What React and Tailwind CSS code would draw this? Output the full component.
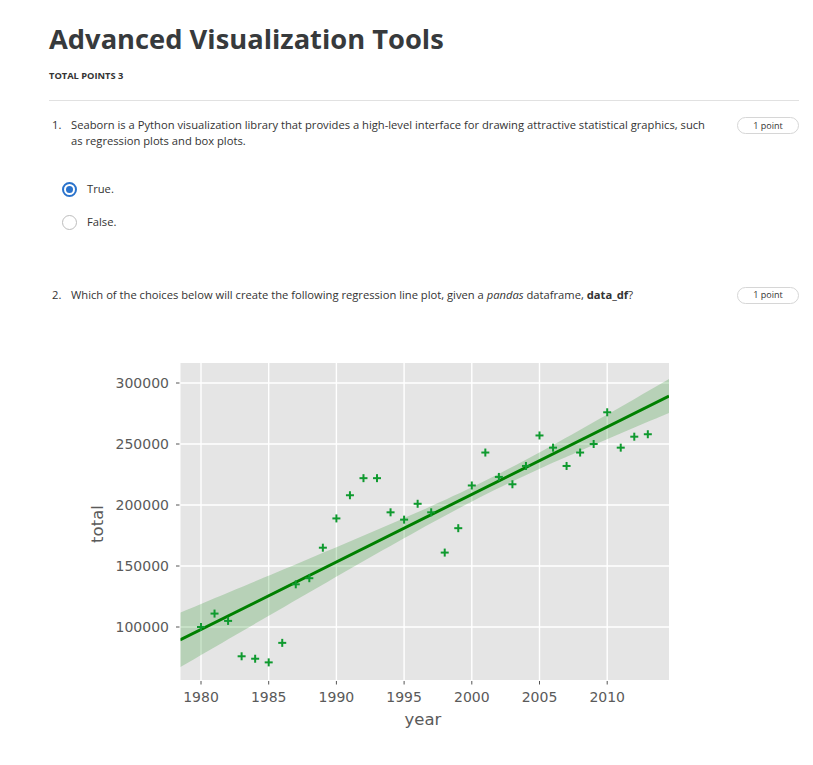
import React from 'react';

const points = [
  [1980, 100000], [1981, 111000], [1982, 105000], [1983, 76000], [1984, 74000],
  [1985, 71000], [1986, 87000], [1987, 135000], [1988, 140000], [1989, 165000],
  [1990, 189000], [1991, 208000], [1992, 222000], [1993, 222000], [1994, 194000],
  [1995, 188000], [1996, 201000], [1997, 194000], [1998, 161000], [1999, 181000],
  [2000, 216000], [2001, 243000], [2002, 223000], [2003, 217000], [2004, 232000],
  [2005, 257000], [2006, 247000], [2007, 232000], [2008, 243000], [2009, 250000],
  [2010, 276000], [2011, 247000], [2012, 256000], [2013, 258000],
];

// page coordinates of the plot (svg is offset by translate)
const px = (year) => 201 + (year - 1980) * 13.54;
const py = (v) => 627 - ((v - 100000) / 50000) * 61;
const lineY = (x) => 640 - 0.499 * (x - 180);
const halfW = (x) => Math.sqrt(49 + 0.0073 * (x - 489) * (x - 489));

const bandPath = () => {
  const top = [];
  const bottom = [];
  for (let x = 180; x <= 669; x += 7) {
    top.push(`${x},${(lineY(x) - halfW(x)).toFixed(1)}`);
    bottom.unshift(`${x},${(lineY(x) + halfW(x)).toFixed(1)}`);
  }
  top.push(`669,${(lineY(669) - halfW(669)).toFixed(1)}`);
  bottom.unshift(`669,${(lineY(669) + halfW(669)).toFixed(1)}`);
  return 'M' + top.join(' L') + ' L' + bottom.join(' L') + ' Z';
};

const Chart = () => {
  const xticks = [1980, 1985, 1990, 1995, 2000, 2005, 2010];
  const yticks = [300000, 250000, 200000, 150000, 100000];
  return (
    <svg width="600" height="390" className="block ml-[31px] mt-[46px]">
      <defs>
        <clipPath id="plot">
          <rect x="180.5" y="363" width="488.5" height="317" />
        </clipPath>
      </defs>
      <g transform="translate(-80,-350)" fontFamily="'DejaVu Sans', sans-serif">
        <rect x="180.5" y="363" width="488.5" height="317" fill="#e5e5e5" />
        {xticks.map((t) => (
          <line key={t} x1={px(t)} x2={px(t)} y1="363" y2="680" stroke="#fff" strokeWidth="1.4" />
        ))}
        {yticks.map((t) => (
          <line key={t} x1="180.5" x2="669" y1={py(t)} y2={py(t)} stroke="#fff" strokeWidth="1.4" />
        ))}
        <g clipPath="url(#plot)">
          <path d={bandPath()} fill="#008000" fillOpacity="0.2" />
          <line x1="180" y1={lineY(180)} x2="669" y2={lineY(669)} stroke="#008000" strokeWidth="3" />
        </g>
        {points.map(([yr, v]) => {
          const x = px(yr);
          const y = py(v);
          return (
            <g key={yr} stroke="#0f9a2f" strokeWidth="2">
              <line x1={x - 4} x2={x + 4} y1={y} y2={y} />
              <line x1={x} x2={x} y1={y - 4} y2={y + 4} />
            </g>
          );
        })}
        {yticks.map((t) => (
          <g key={t}>
            <line x1="176" x2="179.5" y1={py(t)} y2={py(t)} stroke="#555" strokeWidth="1" />
            <text x="169" y={py(t) + 5} textAnchor="end" fontSize="14" fill="#5a5a5a">{t}</text>
          </g>
        ))}
        {xticks.map((t) => (
          <g key={t}>
            <line x1={px(t)} x2={px(t)} y1="681" y2="684.5" stroke="#555" strokeWidth="1" />
            <text x={px(t)} y="702" textAnchor="middle" fontSize="14" fill="#5a5a5a">{t}</text>
          </g>
        ))}
        <text x="423" y="725" textAnchor="middle" fontSize="16.5" fill="#5a5a5a">year</text>
        <text x="103" y="524" textAnchor="middle" fontSize="16.5" fill="#5a5a5a" transform="rotate(-90 103 524)">total</text>
      </g>
    </svg>
  );
};

const Pill = () => (
  <div className="w-[62px] h-[17px] rounded-full border border-[#d6d6d6] flex items-center justify-center text-[9px] text-[#333] shrink-0">
    1 point
  </div>
);

const Radio = ({ checked, label }) => (
  <div className="flex items-center gap-[10px]">
    {checked ? (
      <div className="w-[15px] h-[15px] rounded-full border-[2px] border-[#2a73cc] flex items-center justify-center">
        <div className="w-[7px] h-[7px] rounded-full bg-[#2a73cc]" />
      </div>
    ) : (
      <div className="w-[15px] h-[15px] rounded-full border-[1.5px] border-[#bdbdbd]" />
    )}
    <span className="text-[11.2px] text-[#333]">{label}</span>
  </div>
);

export default function App() {
  return (
    <div className="min-h-screen bg-white pl-[49px] pr-[14px] pt-[21px] font-['Open_Sans',sans-serif] text-[#333]">
      <h1 className="text-[27.3px] leading-[36px] font-bold text-[#373a3c]">Advanced Visualization Tools</h1>
      <div className="mt-[13px] text-[9.3px] leading-[12px] font-bold uppercase text-[#333]">Total Points 3</div>
      <div className="mt-[18px] border-t border-[#e1e1e1]" />

      <div className="mt-[16px] flex justify-between">
        <div className="flex">
          <span className="w-[22px] pl-[3px] text-[11.2px] leading-[15.5px]">1.</span>
          <div>
            <p className="w-[645px] text-[11.2px] leading-[15.5px]">
              Seaborn is a Python visualization library that provides a high-level interface for drawing attractive statistical graphics, such as regression plots and box plots.
            </p>
            <div className="mt-[33px] -ml-[9px] flex flex-col gap-[16px]">
              <Radio checked label="True." />
              <Radio label="False." />
            </div>
          </div>
        </div>
        <Pill />
      </div>

      <div className="mt-[56px] flex justify-between items-center">
        <div className="flex">
          <span className="w-[22px] pl-[3px] text-[11.2px] leading-[15.5px]">2.</span>
          <p className="text-[11.2px] leading-[15.5px]">
            Which of the choices below will create the following regression line plot, given a <i>pandas</i> dataframe, <b>data_df</b>?
          </p>
        </div>
        <Pill />
      </div>

      <Chart />
    </div>
  );
}
